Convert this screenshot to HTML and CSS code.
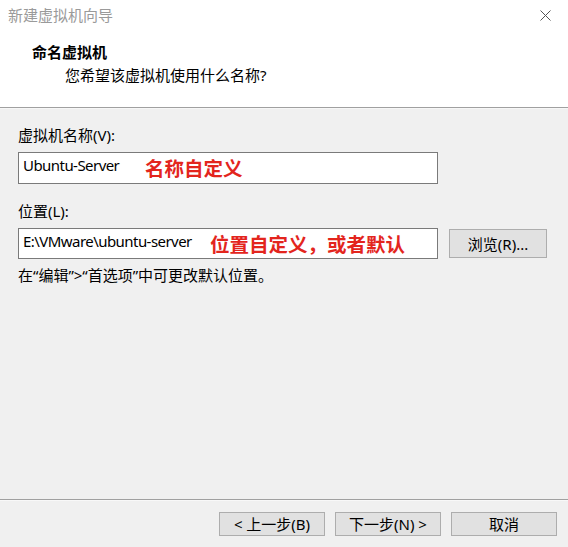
FILE: index.html
```html
<!DOCTYPE html>
<html lang="zh-CN">
<head>
    <meta charset="UTF-8">
    <meta name="viewport" content="width=device-width, initial-scale=1.0">
    <title>新建虚拟机向导</title>
    <link rel="stylesheet" href="styles.css">
</head>
<body>
    <div class="window">
        <div class="top">
            <div class="titlebar">
                <span class="title">新建虚拟机向导</span>
                <svg class="close" width="11" height="11" viewBox="0 0 11 11">
                    <path d="M0.5 0.5 L10.5 10.5 M10.5 0.5 L0.5 10.5" stroke="#555" stroke-width="1" fill="none"/>
                </svg>
            </div>
            <div class="header">
                <h1>命名虚拟机</h1>
                <p class="subtitle">您希望该虚拟机使用什么名称?</p>
            </div>
        </div>

        <div class="content">
            <label class="label">虚拟机名称(V):</label>
            <div class="row">
                <div class="field name-field">
                    <span class="value">Ubuntu-Server</span>
                    <span class="note note-name">名称自定义</span>
                </div>
            </div>

            <label class="label label-location">位置(L):</label>
            <div class="row">
                <div class="field location-field">
                    <span class="value">E:\VMware\ubuntu-server</span>
                    <span class="note note-location">位置自定义，或者默认</span>
                </div>
                <button class="btn browse">浏览(R)...</button>
            </div>
            <p class="hint">在“编辑”&gt;“首选项”中可更改默认位置。</p>
        </div>

        <div class="footer">
            <button class="btn">&lt; 上一步(B)</button>
            <button class="btn">下一步(N) &gt;</button>
            <button class="btn">取消</button>
        </div>
    </div>
</body>
</html>
```

FILE: styles.css
```css
* {
    box-sizing: border-box;
    margin: 0;
    padding: 0;
}

body {
    font-family: "Segoe UI", "Noto Sans", "Noto Sans CJK SC", sans-serif;
    font-size: 15px;
    color: #000000;
    background: #f0f0f0;
}

.window {
    width: 568px;
    height: 547px;
    display: flex;
    flex-direction: column;
    background: #f0f0f0;
}

.top {
    background: #ffffff;
    border-bottom: 1px solid #a0a0a0;
}

.titlebar {
    height: 30px;
    display: flex;
    align-items: center;
    justify-content: space-between;
    padding: 0 17px 0 8px;
}

.title {
    color: #9a9a9a;
    line-height: 20px;
}

.close {
    display: block;
}

.header {
    height: 77px;
    padding: 12px 0 0 32px;
}

h1 {
    font-size: 15px;
    font-weight: bold;
    line-height: 20px;
}

.subtitle {
    margin: 3px 0 0 33px;
    line-height: 20px;
}

.content {
    flex: 1;
    padding: 16px 0 0 18px;
    border-top: 1px solid #f7f7f7;
}

.label {
    display: block;
    line-height: 20px;
    margin-bottom: 7px;
}

.label-location {
    margin-top: 17px;
}

.row {
    display: flex;
    align-items: flex-start;
}

.field {
    position: relative;
    width: 420px;
    background: #ffffff;
    border: 1px solid #7a7a7a;
    padding: 2px 4px;
}

.name-field {
    height: 32px;
}

.location-field {
    height: 31px;
}

.value {
    line-height: 20px;
    letter-spacing: -0.55px;
    white-space: nowrap;
}

.note {
    position: absolute;
    top: 50%;
    transform: translateY(-50%);
    font-family: "Noto Sans CJK SC", sans-serif;
    font-size: 19.5px;
    font-weight: bold;
    line-height: 24px;
    color: #e3251d;
    white-space: nowrap;
}

.note-name {
    left: 126px;
}

.note-location {
    left: 191px;
}

.btn {
    width: 106px;
    height: 24px;
    font-family: inherit;
    font-size: 15px;
    line-height: 20px;
    color: #000000;
    background: #e1e1e1;
    border: 1px solid #adadad;
}

.browse {
    width: 98px;
    height: 29px;
    margin: 1px 0 0 11px;
}

.hint {
    margin-top: 6px;
    line-height: 20px;
}

.footer {
    height: 48px;
    display: flex;
    justify-content: flex-end;
    gap: 10px;
    padding: 12px 11px 0 0;
    border-top: 1px solid #a0a0a0;
    box-shadow: inset 0 1px 0 #f8f8f8;
}
```
